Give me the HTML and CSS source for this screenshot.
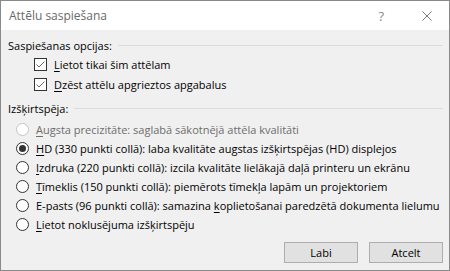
FILE: index.html
```html
<!DOCTYPE html>
<html lang="lv">
<head>
    <meta charset="UTF-8">
    <title>Attēlu saspiešana</title>
    <link rel="stylesheet" href="styles.css">
</head>
<body>
    <div class="dialog">
        <div class="titlebar">
            <span class="title">Attēlu saspiešana</span>
            <span class="help">?</span>
            <svg class="close" width="10" height="10" viewBox="0 0 10 10">
                <path d="M0.5 0.5 L9.5 9.5 M9.5 0.5 L0.5 9.5" stroke="#7a7a7a" stroke-width="1" fill="none"/>
            </svg>
        </div>

        <div class="content">
            <div class="group-title">
                <span>Saspiešanas opcijas:</span>
                <div class="rule"></div>
            </div>
            <div class="checks">
                <div class="row">
                    <svg class="box" width="13" height="13" viewBox="0 0 13 13">
                        <rect x="0.5" y="0.5" width="12" height="12" fill="#fff" stroke="#333"/>
                        <path d="M2.5 6.5 L5 9 L10.5 3.5" stroke="#6a6a6a" stroke-width="1" fill="none"/>
                    </svg>
                    <span><u>L</u>ietot tikai šim attēlam</span>
                </div>
                <div class="row">
                    <svg class="box" width="13" height="13" viewBox="0 0 13 13">
                        <rect x="0.5" y="0.5" width="12" height="12" fill="#fff" stroke="#333"/>
                        <path d="M2.5 6.5 L5 9 L10.5 3.5" stroke="#6a6a6a" stroke-width="1" fill="none"/>
                    </svg>
                    <span><u>D</u>zēst attēlu apgrieztos apgabalus</span>
                </div>
            </div>

            <div class="group-title">
                <span>Izšķirtspēja:</span>
                <div class="rule"></div>
            </div>
            <div class="radios">
                <div class="row disabled">
                    <svg class="radio" width="13" height="13" viewBox="0 0 13 13">
                        <circle cx="6.5" cy="6.5" r="6" fill="#fff" stroke="#c4c4c4"/>
                    </svg>
                    <span><u>A</u>ugsta precizitāte: saglabā sākotnējā attēla kvalitāti</span>
                </div>
                <div class="row">
                    <svg class="radio" width="13" height="13" viewBox="0 0 13 13">
                        <circle cx="6.5" cy="6.5" r="6" fill="#fff" stroke="#333"/>
                        <circle cx="6.5" cy="6.5" r="3.5" fill="#333"/>
                    </svg>
                    <span><u>H</u>D (330 punkti collā): laba kvalitāte augstas izšķirtspējas (HD) displejos</span>
                </div>
                <div class="row">
                    <svg class="radio" width="13" height="13" viewBox="0 0 13 13">
                        <circle cx="6.5" cy="6.5" r="6" fill="#fff" stroke="#333"/>
                    </svg>
                    <span><u>I</u>zdruka (220 punkti collā): izcila kvalitāte lielākajā daļā printeru un ekrānu</span>
                </div>
                <div class="row">
                    <svg class="radio" width="13" height="13" viewBox="0 0 13 13">
                        <circle cx="6.5" cy="6.5" r="6" fill="#fff" stroke="#333"/>
                    </svg>
                    <span><u>T</u>īmeklis (150 punkti collā): piemērots tīmekļa lapām un projektoriem</span>
                </div>
                <div class="row">
                    <svg class="radio" width="13" height="13" viewBox="0 0 13 13">
                        <circle cx="6.5" cy="6.5" r="6" fill="#fff" stroke="#333"/>
                    </svg>
                    <span>E-pasts (96 punkti collā): samazina <u>k</u>oplietošanai paredzētā dokumenta lielumu</span>
                </div>
                <div class="row">
                    <svg class="radio" width="13" height="13" viewBox="0 0 13 13">
                        <circle cx="6.5" cy="6.5" r="6" fill="#fff" stroke="#333"/>
                    </svg>
                    <span><u>L</u>ietot noklusējuma izšķirtspēju</span>
                </div>
            </div>

            <div class="buttons">
                <button class="btn">Labi</button>
                <button class="btn">Atcelt</button>
            </div>
        </div>
    </div>
</body>
</html>
```

FILE: styles.css
```css
body {
    margin: 0;
    font-family: "Open Sans", "Noto Sans", sans-serif;
    font-size: 11px;
    color: #000;
}

.dialog {
    width: 448px;
    height: 269px;
    border: 1px solid #8a8a8a;
    background-color: #f0f0f0;
    display: flex;
    flex-direction: column;
}

.titlebar {
    height: 29px;
    background-color: #fff;
    display: flex;
    align-items: center;
    padding-left: 8px;
}

.title {
    flex: 1;
    font-size: 12px;
    color: #6a6a6a;
}

.help {
    color: #8a8a8a;
    font-size: 13px;
    margin-right: 38px;
}

.close {
    margin-right: 17px;
}

.content {
    flex: 1;
    display: flex;
    flex-direction: column;
    padding: 7px 6px 7px 7px;
}

.group-title {
    display: flex;
    align-items: center;
    height: 16px;
}

.rule {
    flex: 1;
    border-top: 1px solid #dcdcdc;
    margin-left: 6px;
}

.checks {
    padding-left: 26px;
    margin-top: 1px;
    margin-bottom: 6px;
}

.checks .row {
    height: 20px;
}

.row {
    display: flex;
    align-items: center;
    white-space: nowrap;
}

.box {
    margin-right: 7px;
}

.radios {
    padding-left: 8px;
    margin-top: 4px;
}

.radios .row {
    height: 19px;
}

.radio {
    margin-right: 7px;
}

.disabled {
    color: #6d6d6d;
}

u {
    text-underline-offset: 2px;
}

.buttons {
    margin-top: auto;
    display: flex;
    justify-content: flex-end;
    gap: 11px;
}

.btn {
    width: 74px;
    height: 21px;
    background-color: #e1e1e1;
    border: 1px solid #adadad;
    font-family: inherit;
    font-size: 11px;
    padding: 0;
}
```
